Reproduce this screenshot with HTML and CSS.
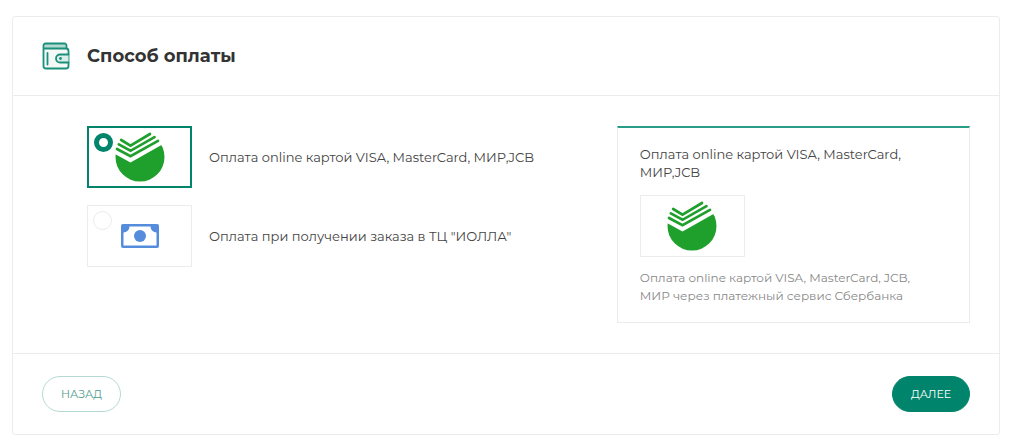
FILE: index.html
```html
<!DOCTYPE html>
<html lang="ru">
<head>
    <meta charset="UTF-8">
    <meta name="viewport" content="width=device-width, initial-scale=1.0">
    <title>Способ оплаты</title>
    <link rel="stylesheet" href="styles.css">
</head>
<body>

    <svg class="symbols" aria-hidden="true">
        <symbol id="sber" viewBox="0 0 50 50">
            <clipPath id="sber-circle">
                <circle cx="25" cy="25" r="24.5"/>
            </clipPath>
            <g clip-path="url(#sber-circle)">
                <path d="M0 22 L15.5 30.6 L50 11 V50 H0 Z" fill="#1fa02c"/>
            </g>
            <g fill="none" stroke="#1fa02c" stroke-width="2.7" stroke-linecap="round">
                <path d="M6.2 8 L15.5 13.6 L35 2"/>
                <path d="M3.8 12.4 L15.5 18.8 L39.5 5.2"/>
                <path d="M2 17 L15.5 24.2 L43 8.9"/>
            </g>
        </symbol>
    </svg>

    <form class="payment">
        <header class="payment-header">
            <svg class="wallet" viewBox="0 0 28 28" aria-hidden="true">
                <path d="M1.5 3.5 V24 a2.5 2.5 0 0 0 2.5 2.5 H24 a2.5 2.5 0 0 0 2.5 -2.5 V8 L24.5 5.5 H3.5 Z" fill="#f4f9f8"/>
                <path d="M1.5 3.5 a2 2 0 0 1 2 -2 H22.5 a2 2 0 0 1 2 2 V6 H3.5 Z" fill="#b5dad3"/>
                <path d="M24.5 6.5 V3.5 a2 2 0 0 0 -2 -2 H3.5 a2 2 0 0 0 -2 2 V24 a2.5 2.5 0 0 0 2.5 2.5 H24 a2.5 2.5 0 0 0 2.5 -2.5 V9 a2.5 2.5 0 0 0 -2.5 -2.5 H2"/>
                <path d="M5.5 11 V22.5"/>
                <path d="M26.5 12.5 H18 a4 4 0 0 0 0 8 H26.5" fill="#dceeeb"/>
                <circle class="wallet-dot" cx="18.5" cy="16.5" r="1.4"/>
            </svg>
            <h1>Способ оплаты</h1>
        </header>

        <div class="payment-body">
            <div class="methods">
                <label class="method">
                    <span class="thumb">
                        <input type="radio" name="payment" value="card" checked>
                        <svg class="sber" aria-hidden="true"><use href="#sber"/></svg>
                    </span>
                    <span>Оплата online картой VISA, MasterCard, МИР,JCB</span>
                </label>
                <label class="method">
                    <span class="thumb">
                        <input type="radio" name="payment" value="cash">
                        <svg class="cash" viewBox="0 0 38 24" aria-hidden="true">
                            <rect width="38" height="24" rx="2" fill="#558cdb"/>
                            <path d="M8.5 2.5 H29.5 A6 6 0 0 0 35.5 8.5 V21.5 H2.5 V8.5 A6 6 0 0 0 8.5 2.5 Z" fill="#fff"/>
                            <circle cx="19" cy="12" r="6" fill="#558cdb"/>
                        </svg>
                    </span>
                    <span>Оплата при получении заказа в ТЦ "ИОЛЛА"</span>
                </label>
            </div>

            <aside class="details">
                <h2>Оплата online картой VISA, MasterCard, МИР,JCB</h2>
                <div class="thumb">
                    <svg class="sber" aria-hidden="true"><use href="#sber"/></svg>
                </div>
                <p>Оплата online картой VISA, MasterCard, JCB, МИР через платежный сервис Сбербанка</p>
            </aside>
        </div>

        <footer class="payment-footer">
            <button type="button" class="btn btn-back">Назад</button>
            <button type="submit" class="btn btn-next">Далее</button>
        </footer>
    </form>

</body>
</html>
```

FILE: styles.css
```css
* {
    box-sizing: border-box;
    margin: 0;
    padding: 0;
}

body {
    font-family: Montserrat, "Open Sans", sans-serif;
    font-size: 13px;
    line-height: 18px;
    color: #444;
    background-color: #fff;
    padding: 16px 24px 8px 12px;
}

.symbols {
    position: absolute;
    width: 0;
    height: 0;
}

.payment {
    border: 1px solid #ececec;
    border-radius: 3px;
}

.payment-header {
    display: flex;
    align-items: center;
    gap: 17px;
    padding: 24px 29px;
    border-bottom: 1px solid #ececec;
}

.payment-header h1 {
    font-size: 18px;
    line-height: 30px;
    font-weight: 700;
    color: #333;
}

.wallet {
    width: 28px;
    height: 28px;
    fill: none;
    stroke: #1a8f79;
    stroke-width: 1.8;
    stroke-linecap: round;
}

.wallet path:nth-child(-n+2) {
    stroke: none;
}

.wallet .wallet-dot {
    fill: #1a8f79;
    stroke: none;
}

.payment-body {
    display: grid;
    grid-template-columns: 3fr 2fr;
    padding: 30px 29px 30px 74px;
}

.methods {
    display: flex;
    flex-direction: column;
    gap: 17px;
}

.method {
    display: flex;
    align-items: center;
    gap: 17px;
    cursor: pointer;
}

.thumb {
    position: relative;
    flex: none;
    display: flex;
    align-items: center;
    justify-content: center;
    width: 105px;
    height: 62px;
    border: 1px solid #ececec;
}

.thumb:has(input:checked) {
    border: 2px solid #00856c;
}

.thumb input {
    appearance: none;
    position: absolute;
    top: 5px;
    left: 5px;
    width: 19px;
    height: 19px;
    border: 1px solid #ececec;
    border-radius: 50%;
    background-color: #fff;
}

.thumb input:checked {
    border: 5px solid #00856c;
}

.sber {
    width: 50px;
    height: 50px;
}

.cash {
    width: 38px;
    height: 24px;
}

.details {
    border: 1px solid #ececec;
    border-top: 2px solid #2a9d88;
    padding: 17px 22px;
}

.details h2 {
    font-size: 13px;
    font-weight: 400;
    max-width: 280px;
}

.details .thumb {
    margin: 14px 0 12px;
}

.details p {
    font-size: 12px;
    color: #888;
    max-width: 280px;
}

.payment-footer {
    display: flex;
    justify-content: space-between;
    padding: 22px 29px;
    border-top: 1px solid #ececec;
}

.btn {
    padding: 0 18px;
    height: 36px;
    border: 1px solid #00856c;
    border-radius: 18px;
    font-family: inherit;
    font-size: 11px;
    text-transform: uppercase;
    cursor: pointer;
}

.btn-back {
    border-color: #b5dad3;
    background-color: #fff;
    color: #4d9c8d;
}

.btn-next {
    background-color: #00856c;
    color: #fff;
}
```
